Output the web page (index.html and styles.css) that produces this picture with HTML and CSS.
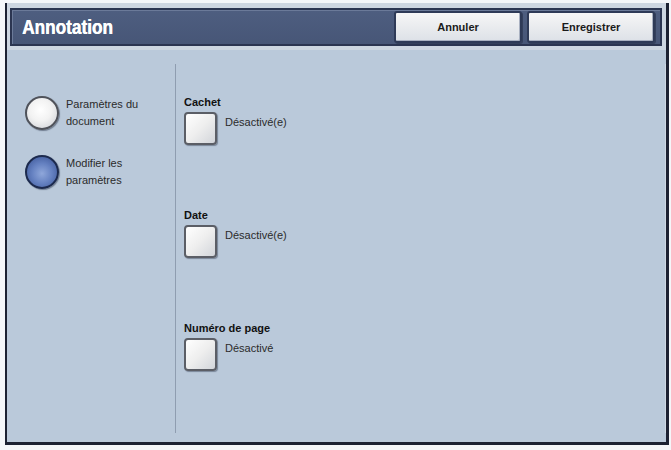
FILE: index.html
```html
<!DOCTYPE html>
<html lang="fr">
<head>
<meta charset="utf-8">
<title>Annotation</title>
<link rel="stylesheet" href="styles.css">
</head>
<body>
<div class="frame">
  <div class="top">
    <div class="header">
      <h1 class="title">Annotation</h1>
      <div class="actions">
        <button class="btn">Annuler</button>
        <button class="btn">Enregistrer</button>
      </div>
    </div>
  </div>
  <div class="panel">
    <div class="left">
      <div class="radio-row">
        <span class="radio"></span>
        <span class="radio-label">Paramètres du<br>document</span>
      </div>
      <div class="radio-row">
        <span class="radio radio-on"></span>
        <span class="radio-label">Modifier les<br>paramètres</span>
      </div>
    </div>
    <div class="right">
      <div class="group">
        <div class="group-label">Cachet</div>
        <div class="option">
          <span class="box"></span>
          <span class="option-text">Désactivé(e)</span>
        </div>
      </div>
      <div class="group">
        <div class="group-label">Date</div>
        <div class="option">
          <span class="box"></span>
          <span class="option-text">Désactivé(e)</span>
        </div>
      </div>
      <div class="group">
        <div class="group-label">Numéro de page</div>
        <div class="option">
          <span class="box"></span>
          <span class="option-text">Désactivé</span>
        </div>
      </div>
    </div>
  </div>
</div>
</body>
</html>
```

FILE: styles.css
```css
html, body {
  margin: 0;
  padding: 0;
}
body {
  width: 671px;
  height: 450px;
  background: #f4f6f9;
  font-family: "Liberation Sans", Arial, sans-serif;
  overflow: hidden;
}
.frame {
  box-sizing: border-box;
  margin: 3px 0 0 5px;
  width: 664px;
  height: 442px;
  border-left: 2px solid #1c2132;
  border-right: 3px solid #1c2132;
  border-bottom: 3px solid #1c2132;
  background: #bac9da;
  display: flex;
  flex-direction: column;
}
.top {
  background: #cdd6e1;
  padding: 5px 4px 4px 3px;
}
.header {
  box-sizing: border-box;
  height: 38px;
  border: 2px solid #2b3551;
  background: linear-gradient(#4e5e80, #475677);
  box-shadow: inset 1px 1px 0 #6b7a99;
  display: flex;
  align-items: center;
  padding: 0 5px 0 10px;
}
.title {
  margin: 0;
  color: #ffffff;
  font-family: "Liberation Sans", Arial, sans-serif;
  font-weight: bold;
  font-size: 20px;
  line-height: 24px;
  transform: scaleX(0.86);
  transform-origin: left center;
  text-shadow: 0.5px 0 0 #ffffff;
}
.actions {
  margin-left: auto;
  display: flex;
  gap: 5px;
}
.btn {
  box-sizing: border-box;
  width: 128px;
  height: 32px;
  border: 2px solid #2e3a57;
  border-radius: 3px;
  background: linear-gradient(#f6f6f6, #dde1e7);
  box-shadow: inset -1px -1px 0 #a9b1c1, 1px 1px 0 #34405c;
  font-family: "Liberation Sans", Arial, sans-serif;
  font-weight: bold;
  font-size: 11px;
  color: #1a1a1a;
  padding: 0;
}
.panel {
  flex: 1;
  display: flex;
}
.left {
  width: 168px;
  box-sizing: border-box;
  padding: 46px 0 0 18px;
  display: flex;
  flex-direction: column;
  gap: 25px;
}
.radio-row {
  display: flex;
  align-items: center;
  gap: 7px;
}
.radio {
  box-sizing: border-box;
  width: 34px;
  height: 34px;
  border-radius: 50%;
  border: 2px solid #4f525a;
  background: radial-gradient(circle at 45% 40%, #ffffff 0%, #f2f2f2 45%, #c9ccd2 100%);
  box-shadow: 1px 1px 1px rgba(40, 50, 70, 0.5);
  flex: none;
}
.radio-on {
  border-color: #1c2a4e;
  background: radial-gradient(circle at 50% 55%, #8fa7da 0%, #6581c1 45%, #354f90 100%);
}
.radio-label {
  font-size: 11px;
  line-height: 17px;
  color: #2b2b2b;
}
.right {
  flex: 1;
  margin: 14px 0 9px 0;
  border-left: 1px solid #8f9db0;
  box-shadow: -1px 0 0 #cfd8e3 inset;
  padding: 32px 0 0 8px;
  display: flex;
  flex-direction: column;
  gap: 64px;
}
.group-label {
  font-weight: bold;
  font-size: 11px;
  line-height: 13px;
  color: #111111;
  margin-bottom: 3px;
}
.option {
  display: flex;
  align-items: flex-start;
  gap: 8px;
}
.box {
  box-sizing: border-box;
  width: 33px;
  height: 33px;
  border: 2px solid #5b5e66;
  border-radius: 4px;
  background: linear-gradient(135deg, #ffffff, #eeeeee 50%, #d2d5da);
  box-shadow: 1px 1px 1px rgba(40, 50, 70, 0.45);
  flex: none;
}
.option-text {
  font-size: 11px;
  line-height: 13px;
  color: #2b2b2b;
  margin-top: 4px;
}
```
